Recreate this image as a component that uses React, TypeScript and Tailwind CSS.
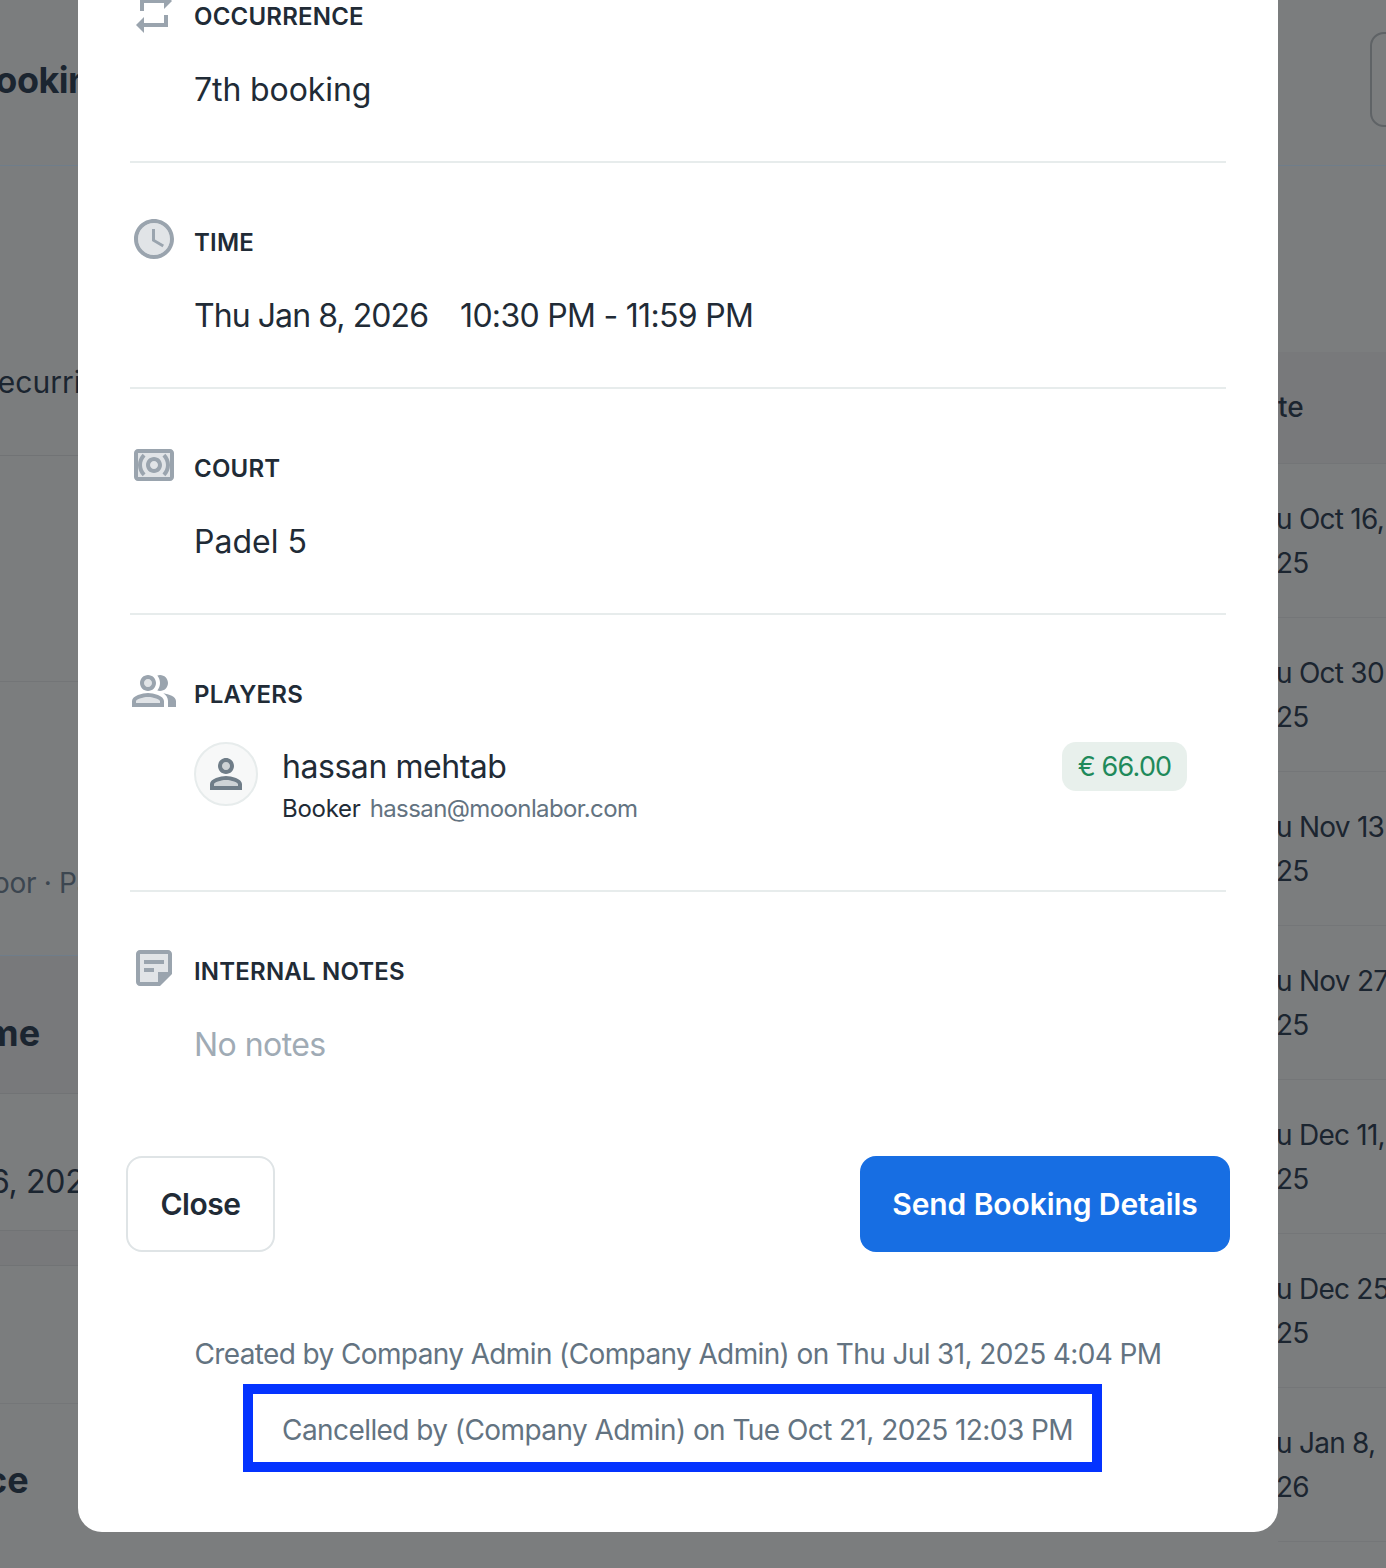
import type { ReactNode } from 'react';

const tone = 'fill-current opacity-30';

function RepeatIcon() {
  return (
    <svg viewBox="0 0 24 24" className="h-12 w-12 shrink-0 fill-current text-[#9aa4ae]">
      <path d="M7 7h10v3l4-4-4-4v3H5v6h2V7zm10 10H7v-3l-4 4 4 4v-3h12v-6h-2v4z" />
    </svg>
  );
}

function ClockIcon() {
  return (
    <svg viewBox="0 0 24 24" className="h-12 w-12 shrink-0 fill-current text-[#9aa4ae]">
      <circle cx="12" cy="12" r="8" className={tone} />
      <path d="M11.99 2C6.47 2 2 6.48 2 12s4.47 10 9.99 10C17.52 22 22 17.52 22 12S17.52 2 11.99 2zM12 20c-4.42 0-8-3.58-8-8s3.58-8 8-8 8 3.58 8 8-3.58 8-8 8z" />
      <path d="M12.5 7H11v6l5.25 3.15.75-1.23-4.5-2.67z" />
    </svg>
  );
}

function CourtIcon() {
  return (
    <svg viewBox="0 0 24 24" className="h-12 w-12 shrink-0 fill-current text-[#9aa4ae]">
      <rect x="4" y="6" width="16" height="12" className={tone} />
      <path d="M20 4H4c-1.1 0-2 .9-2 2v12c0 1.1.9 2 2 2h16c1.1 0 2-.9 2-2V6c0-1.1-.9-2-2-2zm0 14H4V6h16v12z" />
      <path d="M7.76 16.24l-1.41 1.41C4.78 16.1 4 14.05 4 12c0-2.05.78-4.1 2.34-5.66l1.41 1.41C6.59 8.93 6 10.46 6 12s.59 3.07 1.76 4.24zm9.9 1.42l-1.41-1.41C17.41 15.07 18 13.54 18 12s-.59-3.07-1.76-4.24l1.41-1.41C19.22 7.9 20 9.95 20 12c0 2.05-.78 4.1-2.34 5.66z" />
      <path fillRule="evenodd" d="M12 8c-2.21 0-4 1.79-4 4s1.79 4 4 4 4-1.79 4-4-1.79-4-4-4zm0 6c-1.1 0-2-.9-2-2s.9-2 2-2 2 .9 2 2-.9 2-2 2z" />
    </svg>
  );
}

function PlayersIcon() {
  return (
    <svg viewBox="0 0 24 24" className="h-12 w-12 shrink-0 fill-current text-[#9aa4ae]">
      <circle cx="9" cy="8" r="2" className={tone} />
      <path d="M9 15c-2.7 0-5.8 1.29-6 2.01V18h12v-1c-.2-.71-3.3-2-6-2z" className={tone} />
      <path d="M16.67 13.13C18.04 14.06 19 15.32 19 17v3h4v-3c0-2.18-3.57-3.47-6.33-3.87z" />
      <path d="M15 12c2.21 0 4-1.79 4-4s-1.79-4-4-4c-.47 0-.91.1-1.33.24C14.5 5.27 15 6.58 15 8s-.5 2.73-1.33 3.76c.42.14.86.24 1.33.24z" />
      <path d="M9 12c2.21 0 4-1.79 4-4s-1.79-4-4-4-4 1.79-4 4 1.79 4 4 4zm0-6c1.1 0 2 .9 2 2s-.9 2-2 2-2-.9-2-2 .9-2 2-2zM9 13c-2.67 0-8 1.34-8 4v3h16v-3c0-2.66-5.33-4-8-4zm6 5H3v-.99C3.2 16.29 6.3 15 9 15s5.8 1.29 6 2v1z" />
    </svg>
  );
}

function NotesIcon() {
  return (
    <svg viewBox="0 0 24 24" className="h-12 w-12 shrink-0 fill-current text-[#9aa4ae]">
      <path d="M5 5v14h9v-5h5V5H5z" className={tone} />
      <path d="M19 3H4.99C3.89 3 3 3.9 3 5l.01 14c0 1.1.89 2 1.99 2h10l6-6V5c0-1.1-.9-2-2-2zM5 19V5h14v9h-5v5H5zm7-5H7v-2h5v2zm5-4H7V8h10v2z" />
    </svg>
  );
}

function PersonIcon() {
  return (
    <svg viewBox="0 0 24 24" className="h-12 w-12 fill-current text-[#6f7d88]">
      <circle cx="12" cy="8" r="2" className={tone} />
      <path d="M12 15c-2.7 0-5.8 1.29-6 2.01V18h12v-1c-.2-.71-3.3-2-6-2z" className={tone} />
      <path d="M12 4C9.79 4 8 5.79 8 8s1.79 4 4 4 4-1.79 4-4-1.79-4-4-4zm0 6c-1.1 0-2-.9-2-2s.9-2 2-2 2 .9 2 2-.9 2-2 2zm0 3c-2.67 0-8 1.34-8 4v3h16v-3c0-2.66-5.33-4-8-4zm6 5H6v-.99c.2-.72 3.3-2.01 6-2.01s5.8 1.29 6 2v1z" />
    </svg>
  );
}

function Section({ icon, label, children, last }: { icon: ReactNode; label: string; children: ReactNode; last?: boolean }) {
  return (
    <div className={`mx-[52px] pt-[52px] ${last ? '' : 'border-b-2 border-[#e7ecec]'}`}>
      <div className="flex gap-4">
        {icon}
        <div className="mt-2 text-[24px] leading-[40px] font-semibold tracking-[0.2px] text-[#212b36]">{label}</div>
      </div>
      <div className="ml-16">{children}</div>
    </div>
  );
}

const dates = [
  ['u Oct 16,', '25'],
  ['u Oct 30', '25'],
  ['u Nov 13', '25'],
  ['u Nov 27', '25'],
  ['u Dec 11,', '25'],
  ['u Dec 25', '25'],
  ['u Jan 8,', '26'],
];

function Backdrop() {
  return (
    <div className="flex h-full justify-between text-[#1b2530]">
      {/* left edge of the page behind the modal */}
      <div className="w-[78px] overflow-hidden whitespace-nowrap">
        <div className="h-[166px] border-b border-[#6f7d8a] pt-[56px] text-[36px] leading-[48px] font-bold">
          <div className="-ml-[28px] tracking-[-0.5px]">Booking</div>
        </div>
        <div className="h-[290px] border-b border-[#717375] pt-[196px] text-[30px] leading-[40px]">
          <div className="-ml-[21px]">Recurring</div>
        </div>
        <div className="h-[226px] border-b border-[#737577]" />
        <div className="h-[274px] border-b border-[#6f7d8a] pt-[181px] text-[28px] leading-[40px] text-[#3c4650]">
          <div className="-ml-[27px] tracking-[-0.3px]">Door · Padel</div>
        </div>
        <div className="h-[138px] border-b border-[#717375] bg-[#78797b] pt-[53px] text-[36px] leading-[48px] font-bold">
          <div className="-ml-[48px]">Time</div>
        </div>
        <div className="h-[137px] border-b border-[#717375] pt-[68px] text-[32px] leading-[40px]">
          <div className="-ml-[10px] tracking-[-0.3px]">6, 2025</div>
        </div>
        <div className="h-[35px] border-b border-[#717375] bg-[#78797b]" />
        <div className="h-[138px] border-b border-[#747678]" />
        <div className="pt-[52px] text-[36px] leading-[48px] font-bold">
          <div className="-ml-[62px]">Price</div>
        </div>
      </div>

      {/* right edge of the page behind the modal */}
      <div className="w-[108px] overflow-hidden whitespace-nowrap">
        <div className="h-[166px] border-b border-[#6f7d8a] pt-[32px] pl-[92px]">
          <div className="h-[95px] w-[60px] rounded-[14px] border-2 border-[#5f6366]" />
        </div>
        <div className="h-[186px]" />
        <div className="h-[112px] border-b border-[#737577] bg-[#78797b] pt-[35px] text-[28px] leading-[40px] font-medium">
          <div>te</div>
        </div>
        {dates.map(([line1, line2]) => (
          <div key={line1} className="h-[154px] border-b border-[#747678] pt-[33px] text-[28px] leading-[44px] tracking-[-0.75px]">
            <div className="-ml-[2px]">{line1}</div>
            <div className="-ml-[2px]">{line2}</div>
          </div>
        ))}
      </div>
    </div>
  );
}

export default function App() {
  return (
    <div className="relative h-[1568px] w-[1386px] overflow-hidden bg-[#7b7d7e] font-['Inter',sans-serif]">
      <Backdrop />

      <div className="absolute bottom-[36px] left-[78px] w-[1200px] rounded-b-[24px] bg-white pb-[60px]">
        <Section icon={<RepeatIcon />} label="OCCURRENCE">
          <div className="mt-[29px] mb-[47px] text-[32px] leading-[48px] tracking-[-0.1px] text-[#212b36]">7th booking</div>
        </Section>
        <Section icon={<ClockIcon />} label="TIME">
          <div className="mt-[29px] mb-[47px] flex gap-8 text-[32px] leading-[48px] text-[#212b36]">
            <span className="tracking-[-0.93px]">Thu Jan 8, 2026</span>
            <span className="tracking-[-0.7px]">10:30 PM - 11:59 PM</span>
          </div>
        </Section>
        <Section icon={<CourtIcon />} label="COURT">
          <div className="mt-[29px] mb-[47px] text-[32px] leading-[48px] text-[#212b36]">Padel 5</div>
        </Section>
        <Section icon={<PlayersIcon />} label="PLAYERS">
          <div className="mt-[27px] mr-[39px] mb-[63px] flex items-start justify-between">
            <div className="flex gap-6">
              <div className="flex h-16 w-16 items-center justify-center rounded-full border-2 border-[#e7ecec] bg-[#f7f8f8]">
                <PersonIcon />
              </div>
              <div>
                <div className="pt-px text-[32px] leading-[48px] tracking-[-0.45px] text-[#212b36]">hassan mehtab</div>
                <div className="flex gap-[9px] text-[24px] leading-[36px]">
                  <span className="tracking-[-0.25px] text-[#212b36]">Booker</span>
                  <span className="tracking-[-0.6px] text-[#637381]">hassan@moonlabor.com</span>
                </div>
              </div>
            </div>
            <div className="flex h-[49px] w-[125px] items-center justify-center rounded-[14px] bg-[#e8f0ec] pt-px text-[27px] tracking-[-0.8px] text-[#1f8a5b]">
              € 66.00
            </div>
          </div>
        </Section>
        <Section icon={<NotesIcon />} label="INTERNAL NOTES" last>
          <div className="mt-[29px] text-[32px] leading-[48px] tracking-[-0.55px] text-[#a0abb5]">No notes</div>
        </Section>

        <div className="mx-12 mt-[87px] flex items-center justify-between">
          <button className="h-[96px] w-[149px] rounded-2xl border-2 border-[#dfe4e6] text-[30px] font-semibold tracking-[-0.5px] text-[#212b36]">
            Close
          </button>
          <button className="h-[96px] w-[370px] rounded-2xl bg-[#176ee3] text-[30px] font-semibold tracking-[-0.1px] text-white">
            Send Booking Details
          </button>
        </div>

        <div className="mt-[82px] flex flex-col items-center text-[28px] leading-[40px] text-[#637381]">
          <div className="tracking-[-0.62px]">Created by Company Admin (Company Admin) on Thu Jul 31, 2025 4:04 PM</div>
          <div className="mt-2.5 -ml-[11px] flex h-[88px] w-[859px] items-center border-[10px] border-[#0433ff] pt-1 pl-[29px] tracking-[-0.57px] whitespace-nowrap">
            Cancelled by (Company Admin) on Tue Oct 21, 2025 12:03 PM
          </div>
        </div>
      </div>
    </div>
  );
}
